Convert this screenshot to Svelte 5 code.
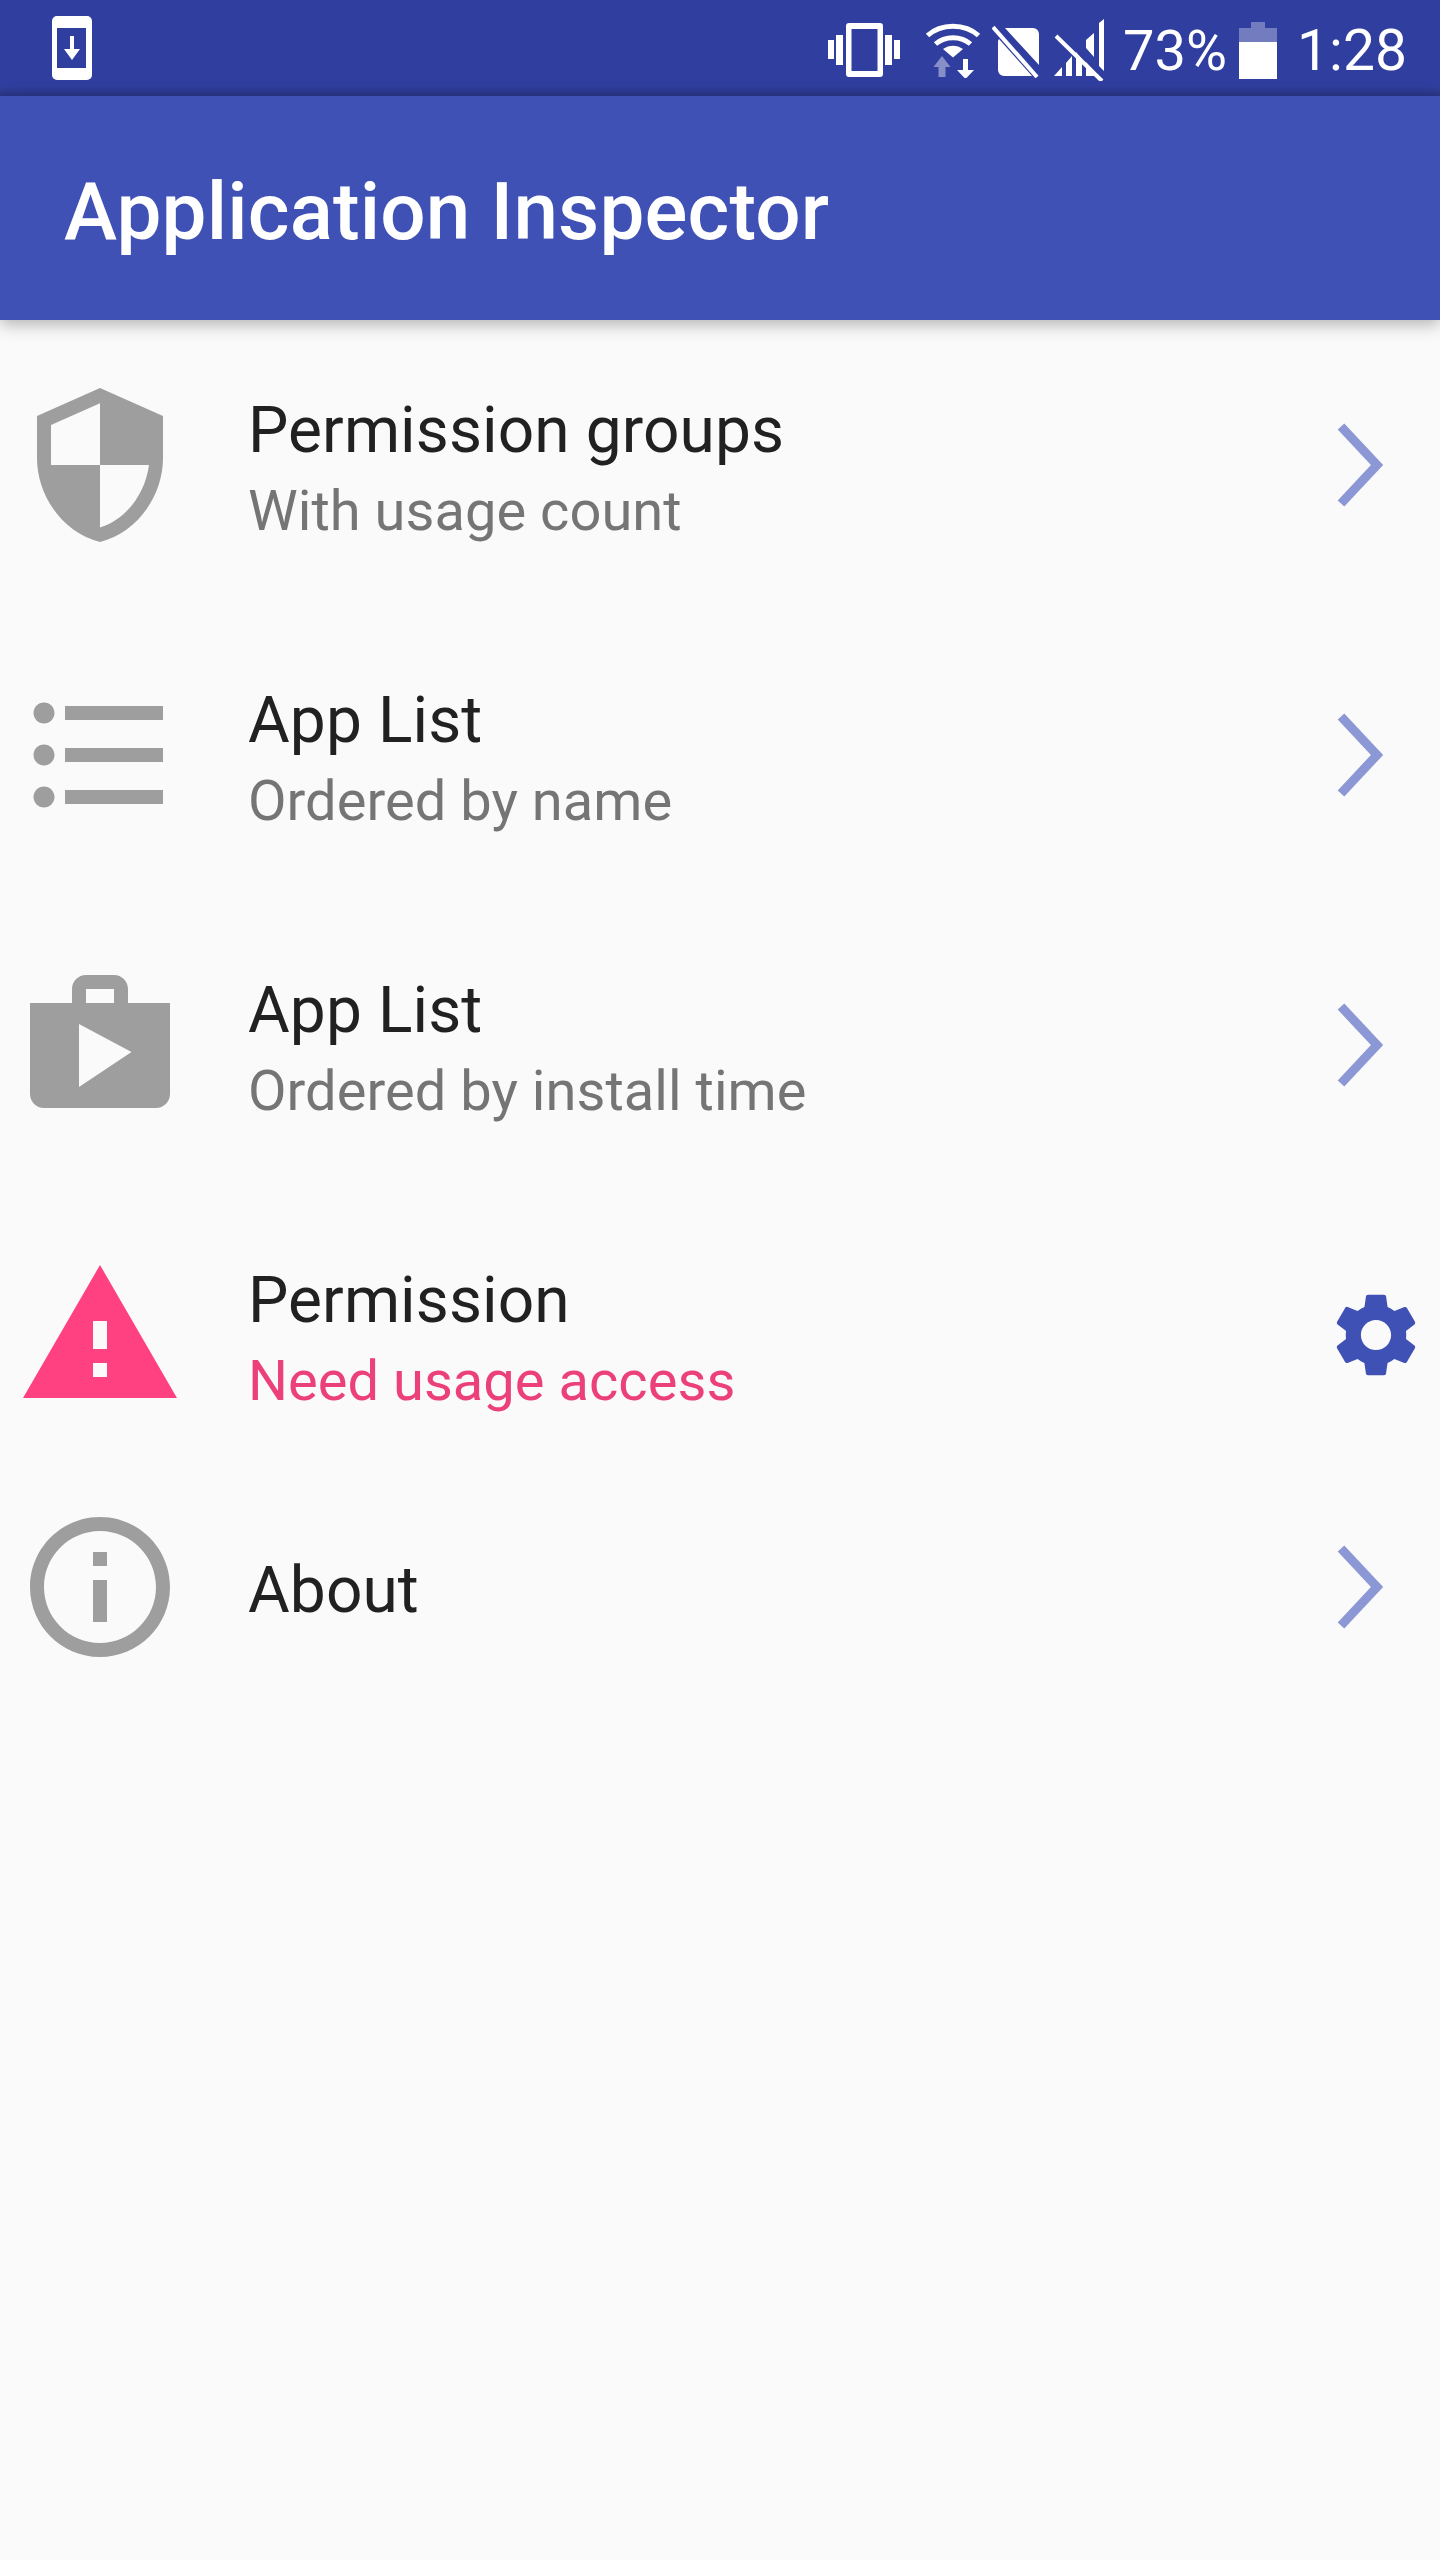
<script>
  const icons = {
    shield: "M12 1L3 5v6c0 5.55 3.84 10.74 9 12 5.16-1.26 9-6.45 9-12V5l-9-4zm0 10.99h7c-.53 4.12-3.28 7.79-7 8.94V12H5V6.3l7-3.11v8.8z",
    list: "M4 10.5c-.83 0-1.5.67-1.5 1.5s.67 1.5 1.5 1.5 1.5-.67 1.5-1.5-.67-1.5-1.5-1.5zm0-6c-.83 0-1.5.67-1.5 1.5S3.17 7.5 4 7.5 5.5 6.83 5.5 6 4.83 4.5 4 4.5zm0 12c-.83 0-1.5.68-1.5 1.5s.68 1.5 1.5 1.5 1.5-.68 1.5-1.5-.67-1.5-1.5-1.5zM7 19h14v-2H7v2zm0-6h14v-2H7v2zm0-8v2h14V5H7z",
    shop: "M16 6V4c0-1.11-.89-2-2-2h-4c-1.11 0-2 .89-2 2v2H2v13c0 1.11.89 2 2 2h16c1.11 0 2-.89 2-2V6h-6zm-6-2h4v2h-4V4zM9 18V9l7.5 4L9 18z",
    warning: "M1 21h22L12 2 1 21zm12-3h-2v-2h2v2zm0-4h-2v-4h2v4z",
    info: "M11 17h2v-6h-2v6zm1-15C6.48 2 2 6.48 2 12s4.48 10 10 10 10-4.48 10-10S17.52 2 12 2zm0 18c-4.41 0-8-3.59-8-8s3.59-8 8-8 8 3.59 8 8-3.59 8-8 8zM11 9h2V7h-2v2z",
  };
  const gear = "M19.14 12.94c.04-.3.06-.61.06-.94 0-.32-.02-.64-.07-.94l2.03-1.58c.18-.14.23-.41.12-.61l-1.92-3.32c-.12-.22-.37-.29-.59-.22l-2.39.96c-.5-.38-1.03-.7-1.62-.94l-.36-2.54c-.04-.24-.24-.41-.48-.41h-3.84c-.24 0-.43.17-.47.41l-.36 2.54c-.59.24-1.13.57-1.62.94l-2.39-.96c-.22-.08-.47 0-.59.22L2.74 8.87c-.12.21-.08.47.12.61l2.03 1.58c-.05.3-.09.63-.09.94s.02.64.07.94l-2.03 1.58c-.18.14-.23.41-.12.61l1.92 3.32c.12.22.37.29.59.22l2.39-.96c.5.38 1.03.7 1.62.94l.36 2.54c.05.24.24.41.48.41h3.84c.24 0 .44-.17.47-.41l.36-2.54c.59-.24 1.13-.56 1.62-.94l2.39.96c.22.08.47 0 .59-.22l1.92-3.32c.12-.22.07-.47-.12-.61l-2.01-1.58zM12 15.6c-1.98 0-3.6-1.62-3.6-3.6s1.62-3.6 3.6-3.6 3.6 1.62 3.6 3.6-1.62 3.6-3.6 3.6z";

  const rows = [
    { icon: "shield", title: "Permission groups", sub: "With usage count" },
    { icon: "list", title: "App List", sub: "Ordered by name" },
    { icon: "shop", title: "App List", sub: "Ordered by install time" },
    { icon: "warning", title: "Permission", sub: "Need usage access", alert: true },
    { icon: "info", title: "About", short: true },
  ];
</script>

<div class="page">
  <div class="status">
    <svg class="dl" viewBox="0 0 40 64" width="40" height="64" aria-hidden="true">
      <path fill-rule="evenodd" fill="#fff" d="M5 0h30a5 5 0 0 1 5 5v54a5 5 0 0 1-5 5H5a5 5 0 0 1-5-5V5a5 5 0 0 1 5-5zM5 12v40h29V12z" />
      <path fill="#fff" d="M18 20h4v13h6l-8 11-8-11h6z" />
    </svg>
    <div class="status-right">
      <svg class="vib" viewBox="0 0 72 54" width="72" height="54" aria-hidden="true">
        <path fill-rule="evenodd" fill="#fff" d="M21 0h31a3 3 0 0 1 3 3v48a3 3 0 0 1-3 3H21a3 3 0 0 1-3-3V3a3 3 0 0 1 3-3zM23.500 6v42h26V6z" />
        <path fill="#fff" d="M0 17h6v19H0zM8 12h7v30H8zM57 12h7v30h-7zM66 17h6v19h-6z" />
      </svg>
      <svg class="wifi" viewBox="0 0 56 56" width="56" height="56" aria-hidden="true">
        <path fill="none" stroke="#fff" stroke-width="5" d="M2.500 13.500C16 1 40 1 53.500 13.500M10.500 22C20 13.500 36 13.500 45.500 22" />
        <path fill="#fff" d="M28 35.500l-10-8.500c6-4.500 14-4.500 20 0z" />
        <path fill="#fff" opacity="0.42" d="M17 34l8.500 11h-5v10h-7V45h-5z" />
        <path fill="#fff" d="M38 37h5v11h6l-8.500 9L32 48h6z" />
      </svg>
      <svg class="sim" viewBox="0 0 48 54" width="48" height="54" aria-hidden="true">
        <path fill="#fff" d="M13 4h28a6 6 0 0 1 6 6v31zM7 15l33 37H12a6 6 0 0 1-6-6V17z" />
        <path stroke="#fff" stroke-width="4" d="M1 3l44 50" />
      </svg>
      <svg class="signal" viewBox="0 0 52 62" width="52" height="62" aria-hidden="true">
        <path fill="#fff" d="M51 0v52L46 47V4zM41 14v24l-8-9v-8zM1 57l8-9v9zM13 44l6-7 0 20h-6zM23 33l6 7v17h-6zM33 43l8 9v5h-8z" />
        <path stroke="#fff" stroke-width="4" d="M3 17l46 45" />
      </svg>
      <span class="pct">73%</span>
      <div class="battery">
        <div class="nub"></div>
        <div class="empty"></div>
        <div class="full"></div>
      </div>
      <span class="clock">1:28</span>
    </div>
  </div>

  <header class="toolbar">Application Inspector</header>

  <main class="list">
    {#each rows as row}
      <div class="row" class:short={row.short}>
        <svg class="lead" class:pink={row.alert} viewBox="0 0 24 24" aria-hidden="true">
          <path d={icons[row.icon]} />
        </svg>
        <div class="text">
          <div class="title">{row.title}</div>
          {#if row.sub}
            <div class="sub" class:pink={row.alert}>{row.sub}</div>
          {/if}
        </div>
        {#if row.alert}
          <svg class="action gear" viewBox="0 0 24 24" aria-hidden="true">
            <path d={gear} />
          </svg>
        {:else}
          <svg class="action" viewBox="0 0 96 96" aria-hidden="true">
            <path class="chev" d="M13 9.500L49 48 13 86.500" />
          </svg>
        {/if}
      </div>
    {/each}
  </main>
</div>

<style>
  :global(body) {
    margin: 0;
  }
  .page {
    width: 1440px;
    height: 2560px;
    background: #fafafa;
    font-family: Roboto, "Liberation Sans", sans-serif;
    overflow: hidden;
    display: flex;
    flex-direction: column;
  }
  .status {
    height: 96px;
    flex-shrink: 0;
    box-sizing: border-box;
    background: linear-gradient(#303f9f 0, #303f9f 86px, #2a3788 96px);
    color: #fff;
    display: flex;
    align-items: center;
    justify-content: space-between;
    padding: 0 33px 0 52px;
  }
  .status-right {
    display: flex;
    align-items: center;
  }
  .status-right svg {
    display: block;
    flex-shrink: 0;
  }
  .vib {
    margin-right: 25px;
    margin-top: 4px;
  }
  .wifi {
    margin-right: 11px;
    margin-top: 4px;
  }
  .sim {
    margin-right: 13px;
    margin-top: 6px;
  }
  .signal {
    margin-right: 18px;
    margin-top: 4px;
  }
  .pct,
  .clock {
    line-height: 96px;
    margin-top: 6px;
  }
  .pct {
    font-size: 56px;
  }
  .clock {
    font-size: 57px;
  }
  .battery {
    width: 38px;
    margin: 4px 20px 0 12px;
    display: flex;
    flex-direction: column;
    align-items: center;
  }
  .nub {
    width: 14px;
    height: 6px;
    background: rgba(255, 255, 255, 0.32);
  }
  .empty {
    width: 100%;
    height: 14px;
    background: rgba(255, 255, 255, 0.32);
  }
  .full {
    width: 100%;
    height: 37px;
    background: #fff;
  }
  .toolbar {
    height: 224px;
    flex-shrink: 0;
    box-sizing: border-box;
    background: #3f51b5;
    color: #fff;
    font-size: 80px;
    font-weight: 500;
    letter-spacing: 0.15px;
    line-height: 232px;
    padding-left: 64px;
    box-shadow: 0 4px 16px rgba(0, 0, 0, 0.3);
    position: relative;
  }
  .list {
    display: flex;
    flex-direction: column;
  }
  .row {
    height: 290px;
    display: flex;
    align-items: center;
    padding: 0 16px;
  }
  .row.short {
    height: 214px;
  }
  .lead {
    width: 168px;
    height: 168px;
    flex-shrink: 0;
    fill: #9e9e9e;
    margin-right: 64px;
  }
  .lead.pink {
    fill: #ff4081;
  }
  .text {
    flex: 1;
    min-width: 0;
    padding-top: 12px;
  }
  .short .text {
    padding-top: 8px;
  }
  .title {
    font-size: 64px;
    line-height: 80px;
    letter-spacing: 0.1px;
    color: #212121;
  }
  .sub {
    font-size: 56px;
    line-height: 80px;
    letter-spacing: 0.04px;
    color: #757575;
  }
  .sub.pink {
    color: #ec407a;
  }
  .action {
    width: 96px;
    height: 96px;
    flex-shrink: 0;
    overflow: visible;
  }
  .gear {
    fill: #3f51b5;
    transform: scale(1.05);
  }
  .chev {
    fill: none;
    stroke: #8c97d6;
    stroke-width: 9;
  }
</style>
